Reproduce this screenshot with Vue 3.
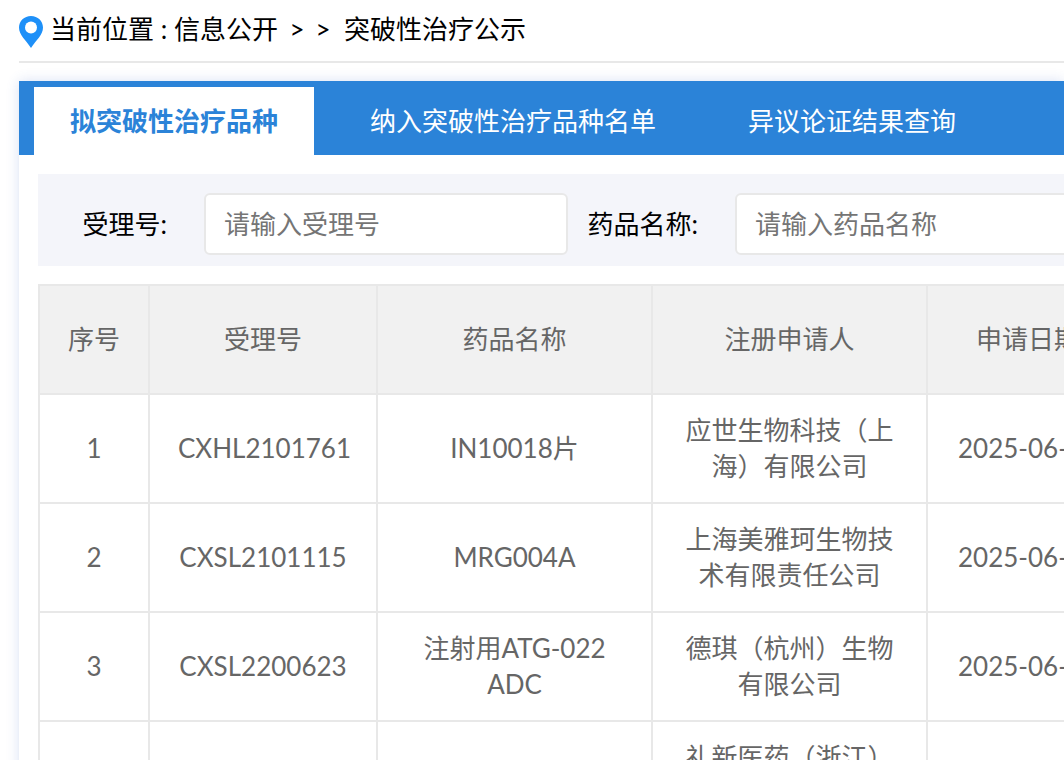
<script setup>
import { ref } from 'vue'

const tabs = ['拟突破性治疗品种', '纳入突破性治疗品种名单', '异议论证结果查询']
const active = ref(0)
const acceptNo = ref('')
const drugName = ref('')

const columns = ['序号', '受理号', '药品名称', '注册申请人', '申请日期']
const rows = [
  ['1', 'CXHL2101761', 'IN10018片', '应世生物科技（上海）有限公司', '2025-06-25'],
  ['2', 'CXSL2101115', 'MRG004A', '上海美雅珂生物技术有限责任公司', '2025-06-25'],
  ['3', 'CXSL2200623', '注射用ATG-022 ADC', '德琪（杭州）生物有限公司', '2025-06-25'],
  ['', '', '', '礼新医药（浙江）有限公司', '']
]
</script>

<template>
  <div class="page">
    <nav class="crumbs">
      <svg class="pin" viewBox="0 0 24 32" aria-hidden="true">
        <path d="M12 0C5.2 0 0 5.100 0 11.600C0 19 7 24.500 12 32C17 24.500 24 19 24 11.600C24 5.100 18.800 0 12 0Z" fill="#1e90f8" />
        <circle cx="12" cy="11.500" r="6" fill="#fff" />
      </svg>
      <span>当前位置</span>
      <span class="colon">:</span>
      <a href="#">信息公开</a>
      <span class="sep">&gt;</span>
      <span class="sep">&gt;</span>
      <a class="current" href="#">突破性治疗公示</a>
    </nav>

    <main class="panel">
      <div class="tabs" role="tablist">
        <button
          v-for="(tab, i) in tabs"
          :key="tab"
          type="button"
          role="tab"
          class="tab"
          :class="{ active: i === active }"
          :aria-selected="i === active"
          @click="active = i"
        >{{ tab }}</button>
      </div>

      <div class="body">
        <form class="search" @submit.prevent>
          <label for="accept-no">受理号:</label>
          <input id="accept-no" v-model="acceptNo" type="text" placeholder="请输入受理号" />
          <label for="drug-name">药品名称:</label>
          <input id="drug-name" v-model="drugName" type="text" placeholder="请输入药品名称" />
        </form>

        <table>
          <colgroup>
            <col class="c-index" />
            <col class="c-no" />
            <col class="c-wide" />
            <col class="c-wide" />
            <col class="c-date" />
          </colgroup>
          <thead>
            <tr>
              <th v-for="c in columns" :key="c" scope="col">{{ c }}</th>
            </tr>
          </thead>
          <tbody>
            <tr v-for="(row, r) in rows" :key="r">
              <td v-for="(cell, c) in row" :key="c">{{ cell }}</td>
            </tr>
          </tbody>
        </table>
      </div>
    </main>
  </div>
</template>

<style>
body {
  margin: 0;
  background: #fff;
  overflow: hidden;
}
</style>

<style scoped>
.page {
  padding-left: 19px;
  font-family: Lato, "Noto Sans CJK SC", sans-serif;
  font-size: 26px;
  line-height: 36px;
  color: #000;
}
.crumbs {
  display: flex;
  align-items: center;
  box-sizing: border-box;
  height: 63px;
  padding-bottom: 3px;
  border-bottom: 2px solid #e8e8e8;
  white-space: nowrap;
}
.crumbs a {
  color: inherit;
  text-decoration: none;
}
.pin {
  width: 24px;
  height: 32px;
  margin-top: 5px;
  margin-right: 7px;
}
.colon {
  width: 20px;
  text-align: center;
}
.sep {
  width: 26px;
  text-align: center;
}
.crumbs a + .sep {
  margin-left: 6px;
}
.current {
  margin-left: 8px;
}
.panel {
  margin-top: 18px;
  box-shadow: 0 0 12px rgba(60, 100, 200, 0.2);
}
.tabs {
  display: flex;
  gap: 20px;
  padding: 6px 0 0 15px;
  background: #2b83d8;
}
.tab {
  flex: none;
  height: 68px;
  padding: 0 36px;
  border: 0;
  background: transparent;
  color: #fff;
  font: inherit;
  white-space: nowrap;
  cursor: pointer;
}
.tab.active {
  background: #fff;
  color: #2b83d8;
  font-weight: 700;
}
.body {
  padding: 19px 0 0 19px;
}
.search {
  display: flex;
  align-items: center;
  padding: 19px 0 11px 18px;
  background: #f4f5fa;
}
.search label {
  flex: none;
  box-sizing: border-box;
  width: 148px;
  padding-right: 37px;
  text-align: right;
}
.search input {
  flex: none;
  box-sizing: border-box;
  width: 364px;
  height: 62px;
  margin: 0 19px 0 0;
  padding: 0 18px;
  border: 2px solid #e8e8e8;
  border-radius: 6px;
  background: #fff;
  color: #333;
  font: inherit;
}
.search input::placeholder {
  color: #757575;
}
table {
  width: 1090px;
  margin-top: 18px;
  border-collapse: collapse;
  table-layout: fixed;
  color: #666;
}
.c-index {
  width: 110px;
}
.c-no {
  width: 228px;
}
.c-wide {
  width: 275px;
}
.c-date {
  width: 202px;
}
th,
td {
  box-sizing: border-box;
  height: 109px;
  padding: 0 28px 2px;
  border: 2px solid #e8e8e8;
  font-weight: 400;
  text-align: center;
}
th {
  padding: 0 0 2px;
  background: #f1f1f1;
}
</style>
